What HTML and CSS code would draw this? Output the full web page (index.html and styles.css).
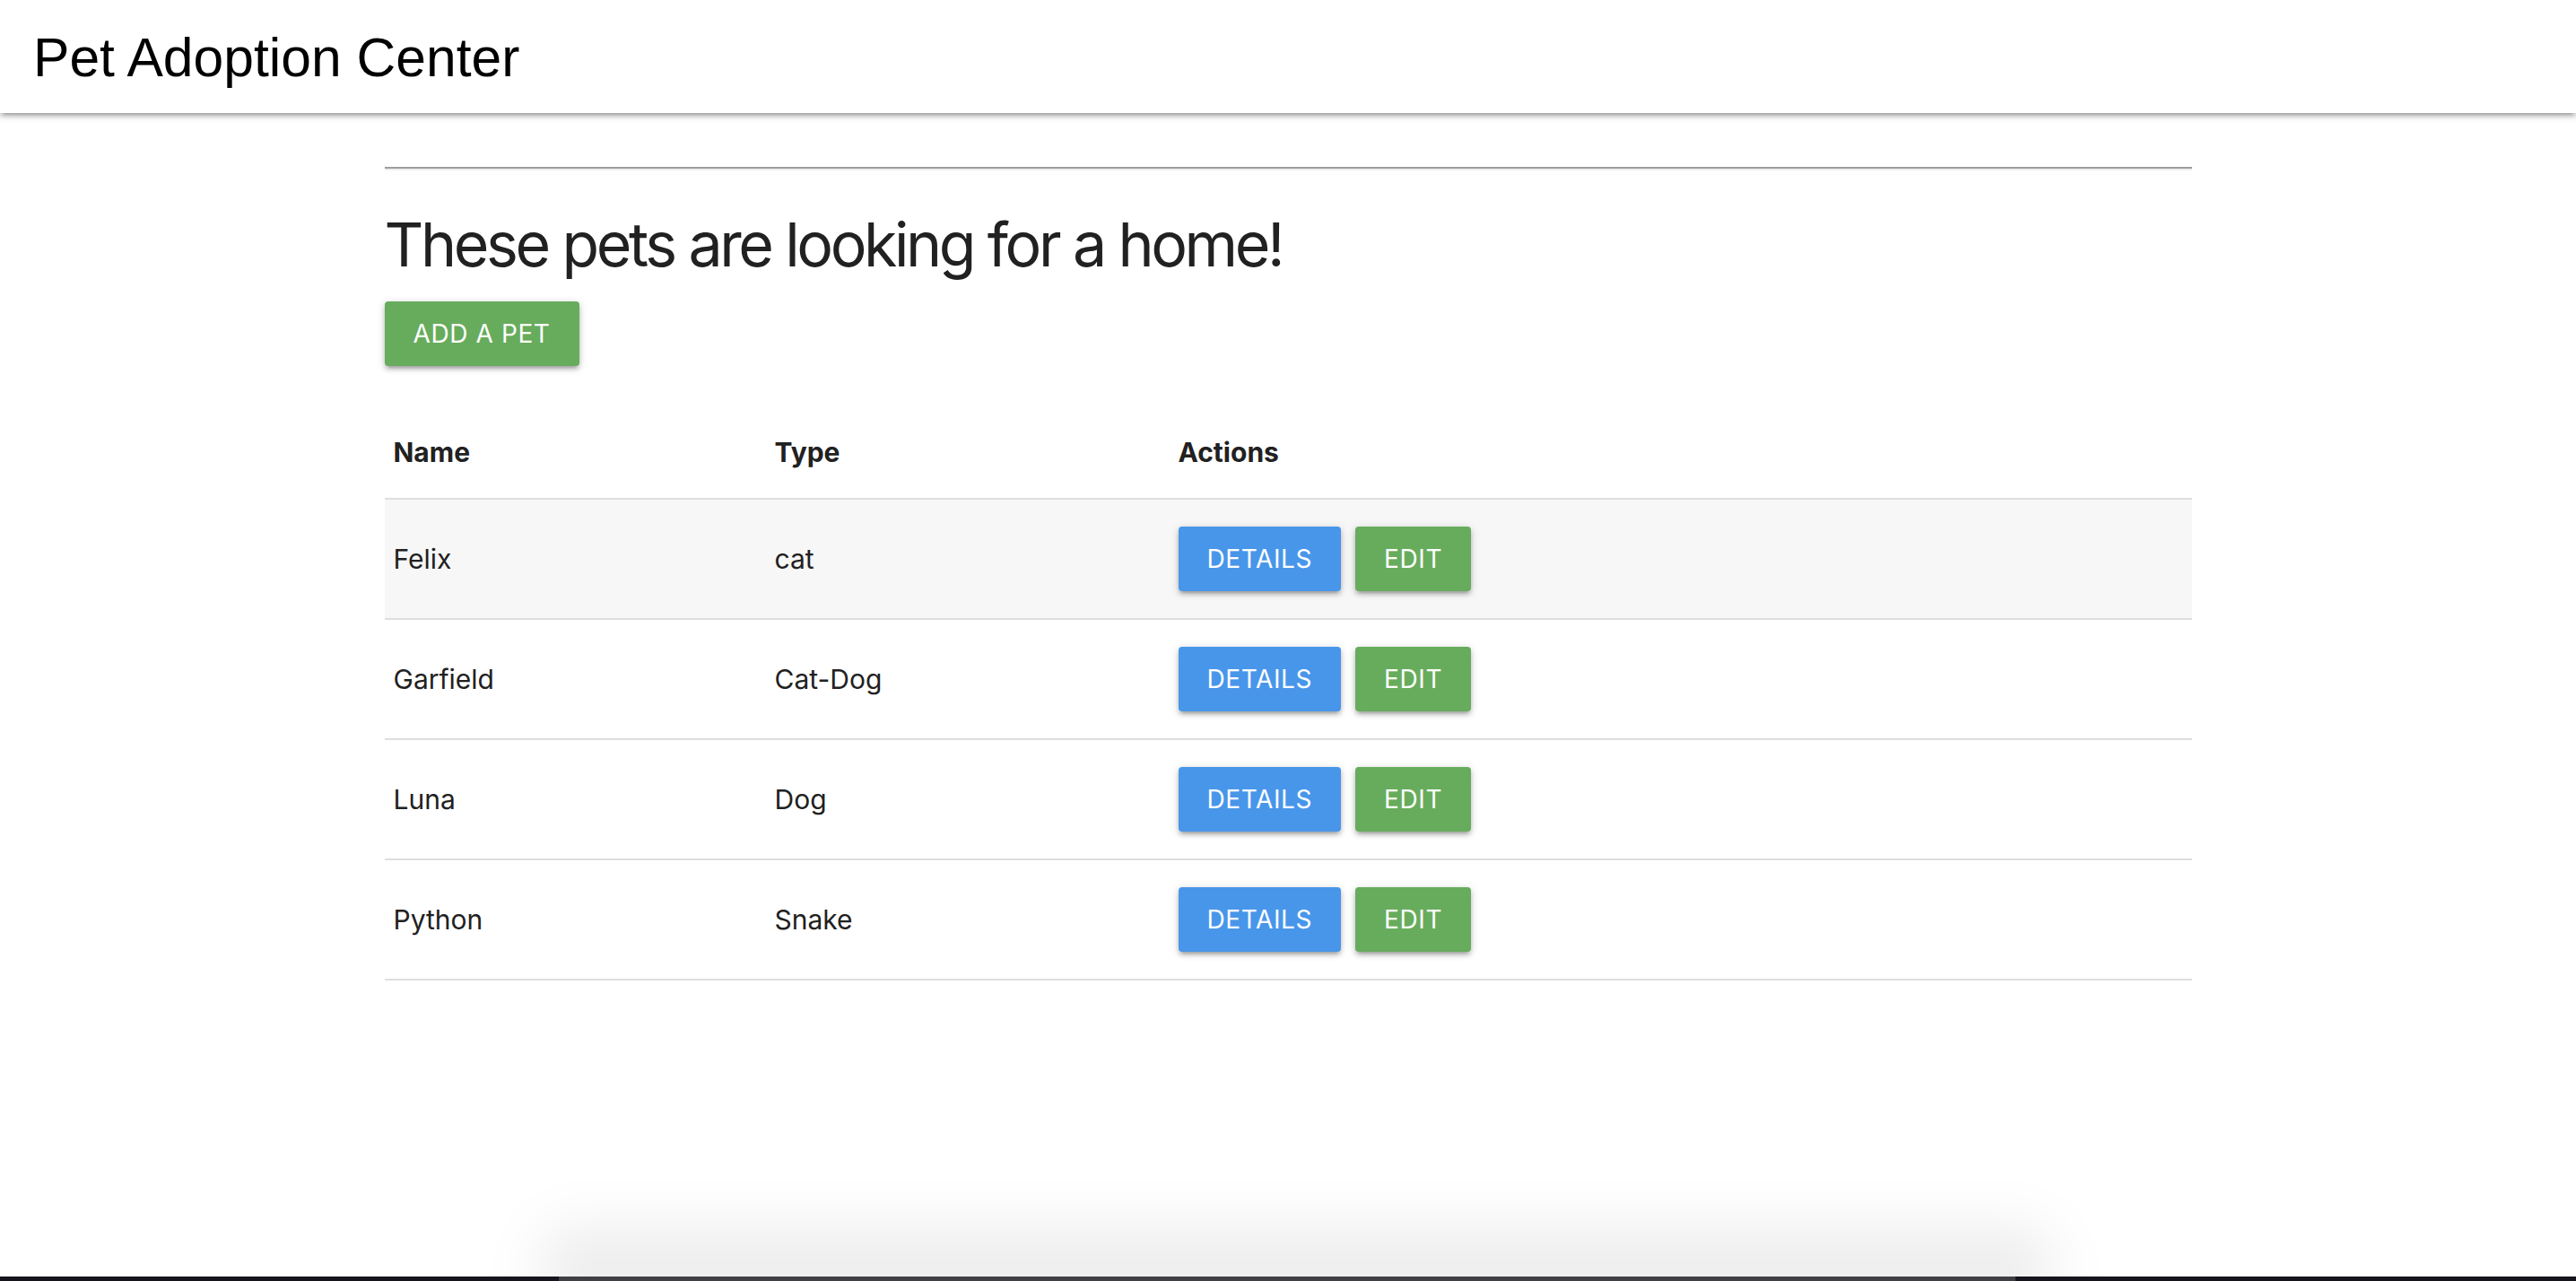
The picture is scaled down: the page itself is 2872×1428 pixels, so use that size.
FILE: index.html
```html
<!DOCTYPE html>
<html lang="en">
<head>
<meta charset="utf-8">
<title>Pet Adoption Center</title>
<link rel="stylesheet" href="styles.css">
</head>
<body>
<header class="topbar">
  <div class="brand">Pet Adoption Center</div>
</header>
<main class="container">
  <hr class="divider">
  <h1 class="title">These pets are looking for a home!</h1>
  <a class="btn btn-green" href="#">Add a pet</a>
  <table class="pets">
    <thead>
      <tr>
        <th class="col-name">Name</th>
        <th class="col-type">Type</th>
        <th>Actions</th>
      </tr>
    </thead>
    <tbody>
      <tr class="hovered">
        <td>Felix</td>
        <td>cat</td>
        <td><div class="actions"><a class="btn btn-blue" href="#">Details</a><a class="btn btn-green" href="#">Edit</a></div></td>
      </tr>
      <tr>
        <td>Garfield</td>
        <td>Cat-Dog</td>
        <td><div class="actions"><a class="btn btn-blue" href="#">Details</a><a class="btn btn-green" href="#">Edit</a></div></td>
      </tr>
      <tr>
        <td>Luna</td>
        <td>Dog</td>
        <td><div class="actions"><a class="btn btn-blue" href="#">Details</a><a class="btn btn-green" href="#">Edit</a></div></td>
      </tr>
      <tr>
        <td>Python</td>
        <td>Snake</td>
        <td><div class="actions"><a class="btn btn-blue" href="#">Details</a><a class="btn btn-green" href="#">Edit</a></div></td>
      </tr>
    </tbody>
  </table>
</main>
<div class="dock-shadow"></div>
<div class="screen-edge"><div class="screen-edge-mid"></div></div>
</body>
</html>
```
FILE: styles.css
```css
html, body {
  margin: 0;
  padding: 0;
  background: #ffffff;
}
body {
  font-family: "Inter", "Roboto", "Liberation Sans", sans-serif;
  color: #212121;
  min-height: 1428px;
  position: relative;
  overflow: hidden;
}
.topbar {
  height: 126px;
  display: flex;
  align-items: center;
  padding-left: 37px;
  background: #ffffff;
  box-shadow: 0 4px 4px 0 rgba(0,0,0,0.14), 0 6px 2px -4px rgba(0,0,0,0.12), 0 2px 10px 0 rgba(0,0,0,0.2);
  position: relative;
  z-index: 2;
}
.brand {
  font-family: "Liberation Sans", Arial, sans-serif;
  font-size: 60.6px;
  color: #000;
  line-height: 1;
  padding-top: 2px;
}
.container {
  width: 2015px;
  margin: 0 auto;
}
.divider {
  margin: 60px 0 0 0;
  height: 0;
  border: 0;
  border-top: 2px solid #9e9e9e;
  border-bottom: 2px solid #eeeeee;
}
.title {
  font-size: 68px;
  font-weight: 400;
  line-height: 75px;
  margin: 45px 0 26px 0;
  color: #212121;
  letter-spacing: -3.4px;
}
.btn {
  display: inline-block;
  height: 72px;
  line-height: 72px;
  padding: 0 32px;
  font-size: 28px;
  letter-spacing: 0.6px;
  text-transform: uppercase;
  text-decoration: none;
  color: #ffffff;
  border-radius: 4px;
  box-shadow: 0 4px 4px 0 rgba(0,0,0,0.14), 0 6px 2px -4px rgba(0,0,0,0.12), 0 2px 10px 0 rgba(0,0,0,0.2);
  white-space: nowrap;
}
.btn-green { background: #67ac5c; }
.btn-blue { background: #4896ea; }
.pets {
  width: 100%;
  border-collapse: collapse;
  margin-top: 42px;
  font-size: 30px;
}
.pets th, .pets td {
  padding: 30px 10px;
  line-height: 45px;
  text-align: left;
  vertical-align: middle;
}
.pets th {
  font-weight: 700;
  padding-top: 32px;
  padding-bottom: 28px;
}
.col-name { width: 405px; }
.col-type { width: 430px; }
.pets tr {
  border-bottom: 2px solid #dedede;
}
.pets tr.hovered {
  background: #f7f7f7;
}
.actions {
  display: flex;
  gap: 16px;
}
.dock-shadow {
  position: absolute;
  left: 600px;
  width: 1690px;
  bottom: -30px;
  height: 90px;
  background: rgba(0,0,0,0.07);
  filter: blur(30px);
  border-radius: 40px;
}
.screen-edge {
  position: absolute;
  left: 0;
  right: 0;
  bottom: 0;
  height: 5px;
  background: #15151d;
}
.screen-edge-mid {
  margin-left: 623px;
  width: 1624px;
  height: 100%;
  background: #3f3f46;
}
```
